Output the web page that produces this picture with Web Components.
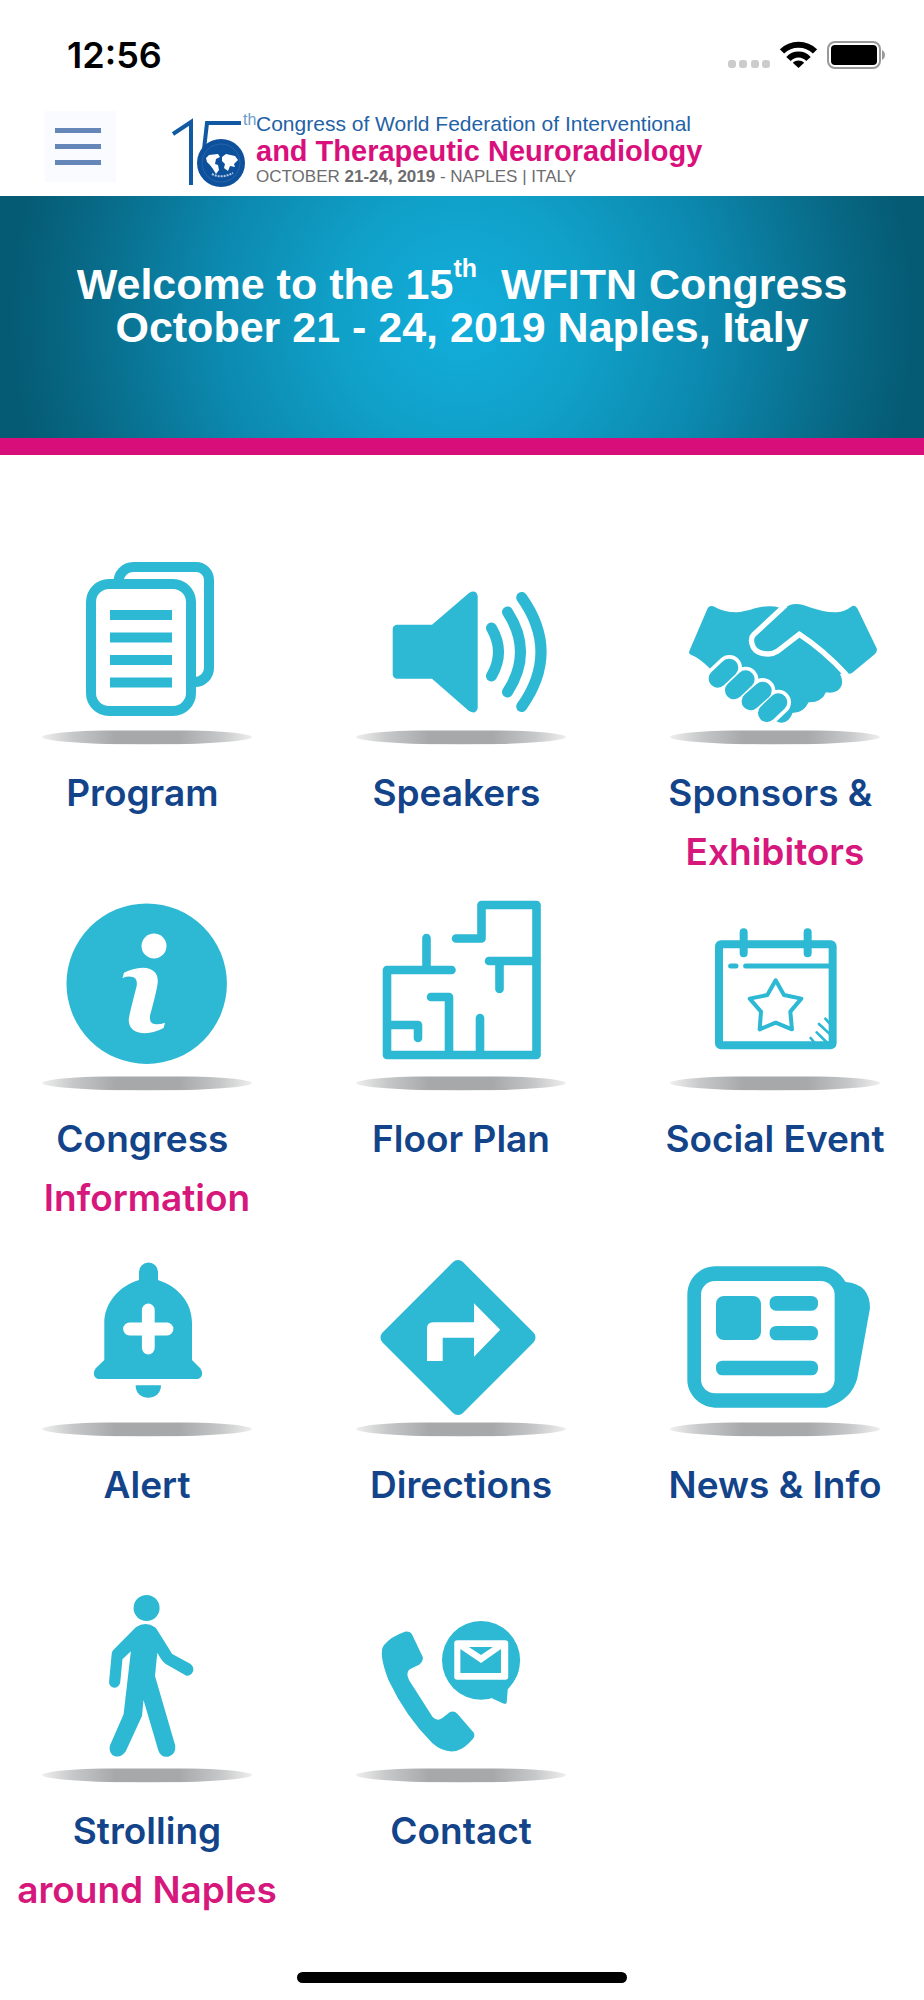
<!DOCTYPE html>
<html lang="en">
<head>
<meta charset="utf-8">
<meta name="viewport" content="width=device-width, initial-scale=1">
<title>WFITN Congress 2019</title>
<style>
  html { overflow-x: clip; }
  body { margin: 0; background: #fff; font-family: Inter, "Liberation Sans", sans-serif; }
</style>
</head>
<body>
<congress-app></congress-app>
<script>
const define = (name, html) => {
  const template = document.createElement('template');
  template.innerHTML = html;
  customElements.define(name, class extends HTMLElement {
    constructor() {
      super();
      this.attachShadow({ mode: 'open' }).append(template.content.cloneNode(true));
    }
  });
};

define('status-bar', `
<style>
  :host { display: flex; justify-content: space-between; align-items: center; height: 110px; padding: 0 38px 0 67px; box-sizing: border-box; color: #000; }
  time { font-size: 36px; line-height: 44px; font-weight: 600; }
  .signals { display: flex; align-items: center; gap: 10px; }
  svg { display: block; }
</style>
<time datetime="12:56">12:56</time>
<div class="signals">
  <svg width="42" height="28" viewBox="0 0 42 28" fill="#ccc" aria-hidden="true"><rect y="19" width="8" height="8" rx="3"/><rect x="11" y="19" width="8" height="8" rx="3"/><rect x="23" y="19" width="8" height="8" rx="3"/><rect x="34" y="19" width="8" height="8" rx="3"/></svg>
  <svg width="37" height="28" viewBox="0 0 37 28" fill="none" stroke="#000" stroke-width="6" aria-label="Wi-Fi" role="img"><path d="M2 10.500C11 1.500 26 1.500 35 10.500"/><path d="M8.500 18C14 12 23 12 28.500 18"/><path d="M18.500 27L12.800 21.800C16 18.800 21 18.800 24.200 21.800Z" fill="#000" stroke="none"/></svg>
  <svg width="59" height="28" viewBox="0 0 59 28" aria-label="Battery" role="img"><rect x="1" y="1" width="52" height="26" rx="7" fill="none" stroke="#999" stroke-width="2"/><rect x="4" y="4" width="46" height="20" rx="4"/><path d="M55 9C59 11 59 17 55 19Z" fill="#999"/></svg>
</div>`);

define('congress-logo', `
<style>
  :host { display: flex; font-family: "Liberation Sans", Arial, sans-serif; }
  svg { display: block; flex: none; overflow: visible; }
  .th { align-self: flex-start; width: 13px; font-size: 16px; line-height: 18px; color: #6b9cc8; }
  .name { white-space: nowrap; }
  .name span { display: block; }
  .top { font-size: 21px; line-height: 26px; color: #1f62a5; }
  .main { font-size: 29px; line-height: 28px; font-weight: 700; color: #d9107c; }
  .date { font-size: 17px; line-height: 24px; color: #6c6d6f; }
</style>
<svg width="71" height="78" viewBox="0 0 71 78" aria-hidden="true">
  <path d="M1 23L19 11V74M69 12H35L31 47" fill="none" stroke="#1259a3" stroke-width="4"/>
  <circle cx="49" cy="52" r="24" fill="#0d509b"/>
  <path d="M34 47L37 44L46 43L48 46L44 48L43 53L46 54L47 59L44 63L41 58L38 54L35 51ZM50 46L54 43L63 45L66 49L62 53L63 56L58 55L56 60L52 57L53 53L50 50Z" fill="#fff"/>
  <path d="M40 63Q50 68 61 62" fill="none" stroke="#b7cce4" stroke-width="2" stroke-dasharray="2 1"/>
  <ellipse cx="49" cy="52" rx="19" ry="19" fill="none" stroke="#3a73b3" stroke-width=".6"/>
</svg>
<span class="th">th</span>
<div class="name">
  <span class="top">Congress of World Federation of Interventional</span>
  <span class="main">and Therapeutic Neuroradiology</span>
  <span class="date">OCTOBER <b>21-24, 2019</b> - NAPLES | ITALY</span>
</div>`);

define('app-header', `
<style>
  :host { display: flex; align-items: flex-start; gap: 56px; height: 86px; padding: 1px 0 0 45px; box-sizing: border-box; }
  button { display: flex; flex-direction: column; justify-content: center; gap: 11px; width: 71px; height: 71px; padding: 0 13px 0 10px; border: 0; background: #fafbfe; flex: none; }
  i { display: block; height: 5px; width: 46px; background: #6486b9; }
</style>
<button type="button" aria-label="Menu"><i></i><i></i><i></i></button>
<slot></slot>`);

define('welcome-banner', `
<style>
  :host { display: block; padding: 67px 0 89px; border-bottom: 17px solid #d80f7b;
    background: radial-gradient(circle 450px at 50% 50%, #12aedc 0%, #10a0c8 28%, #0c88ae 56%, #086a87 84%, #055b74 100%) padding-box; }
  h1 { margin: 0; font: 700 43px/43px "Liberation Sans", Arial, sans-serif; color: #fff; text-align: center; }
  h1 span { display: block; }
  sup { font-size: 25px; line-height: 0; vertical-align: 22px; }
</style>
<h1><span>Welcome to the 15<sup>th</sup>&nbsp; WFITN Congress</span><span>October 21 - 24, 2019 Naples, Italy</span></h1>`);

const icons = {
  program: `<g fill="none" stroke="#2db8d3" stroke-width="10"><path d="M76.500 28A15 15 0 0 1 91.500 12H154A13 13 0 0 1 167 25V113A14 14 0 0 1 153 127"/><rect x="49" y="29" width="100" height="127" rx="18"/><path d="M68 60H130M68 82.500H130M68 105H130M68 127.500H130"/></g>`,
  speakers: `<path d="M41 69.700H76L113 38Q120 34 121.700 41V153Q120 160 113 156L76 123.700H41Q36.700 123 36.700 119V74Q37 70 41 69.700Z"/><g fill="none" stroke="#2db8d3" stroke-width="11" stroke-linecap="round"><path d="M135.500 73Q149.500 97 135.500 121"/><path d="M151.500 57Q177.500 97 151.500 137"/><path d="M165.700 42.500Q204.300 97 165.700 151.500"/></g>`,
  sponsors: `<g transform="translate(-30 -15) scale(.3333)"><path d="M203 205Q208 196 220 199Q250 217 290 217Q310 216 345 205Q385 194 420 203L434 205Q455 186 490 195Q550 218 590 217Q615 215 637 198Q646 194 652 205L710 325Q713 335 705 342L637 398Q628 405 618 396L600 402Q612 425 602 442Q590 462 558 457Q545 488 506 487Q490 520 458 518Q447 548 425 548Q415 548 408 543L300 450L212 388Q180 355 150 343Q146 340 148 333Z"/><path d="M436 196L341 284Q328 297 340 322Q352 342 385 342Q400 342 412 334L478 283Q550 330 618 403" fill="none" stroke="#fff" stroke-width="16"/><g fill="none" stroke="#fff" stroke-width="76" stroke-linecap="round"><path d="M268 383L233 416M317 418L282 451M368 452L332 484M415 487L381 519"/></g><g fill="none" stroke="#2db8d3" stroke-width="54" stroke-linecap="round"><path d="M268 383L233 416M317 418L282 451M368 452L332 484M415 487L381 519"/></g></g>`,
  info: `<circle cx="104.700" cy="82.700" r="80.200"/><circle cx="112" cy="45" r="12.500" fill="#fff"/><path transform="translate(-22 -21) scale(.3635 .3333)" fill="#fff" d="M282 294L286 278Q310 264 338 263Q380 265 379 305Q378 325 358 405Q354 432 374 433Q385 434 399 428L395 444Q370 459 344 460Q300 458 299 420Q300 405 321 318Q324 290 305 290Q295 289 282 294Z"/>`,
  floor: `<path d="M100 37.500H125.500V4H180.500V154H31V69H95.500M70.500 37V69M133 60H180M143.500 60V88M75 96H93V154M31 124H62V137M124 117V154" fill="none" stroke="#2db8d3" stroke-width="8.600" stroke-linecap="round" stroke-linejoin="round"/>`,
  social: `<g transform="translate(-30 -21) scale(.3333)" fill="none" stroke="#2db8d3" stroke-width="24" stroke-linecap="round" stroke-linejoin="round"><rect x="237" y="193" width="341" height="303" rx="6"/><path d="M311 157V220M503 157V220"/><path d="M272 258H288M317 258H573" stroke-width="15"/><path stroke-width="12" d="M407 301L432 345L484 356L451 395L456 448L407 428L359 448L363 395L329 356L382 345Z"/><path stroke-width="8" d="M556 416L570 432M537 432L568 461M530 457L560 487M512 474L522 486"/></g>`,
  alert: `<path d="M97 33V25A9.400 9.400 0 0 1 116 25V33C137 40 150 56 150 76V113L158 121C162 126 160 132 154 132H58C52 132 50 126 54 121L62.300 113V76C62.300 56 77 39 97 33ZM93.600 138.300H119C119 155 93.600 155 93.600 138.300Z"/><path d="M87.500 82H125M106.300 63V101" stroke="#fff" stroke-width="12.800" stroke-linecap="round"/>`,
  directions: `<path d="M102 20L172.500 90.500L102 161L31.500 90.500Z" stroke="#2db8d3" stroke-width="14" stroke-linejoin="round"/><path d="M71 114V81.500Q71 75.300 77.300 75.300H118V56.300L144.200 82.700L118 109.700V90.700H86.700V114Z" fill="#fff"/>`,
  news: `<g transform="translate(-30 -17) scale(.3333)"><path d="M225 109H545Q590 112 617 156Q690 162 690 235L652 445Q635 510 560 533H225C175 530 142 490 142 450V195C142 145 180 110 225 109Z"/><rect x="183" y="153" width="401" height="337" rx="42" fill="#fff"/><rect x="228" y="198" width="135" height="132" rx="24"/><rect x="389" y="198" width="145" height="44" rx="19"/><rect x="389" y="288" width="145" height="43" rx="19"/><rect x="228" y="392" width="306" height="44" rx="19"/></g>`,
  strolling: `<g transform="translate(-42 -23) scale(.3827 .3333)"><ellipse cx="383" cy="114" rx="34" ry="39"/><path d="M355 172Q380 152 405 172Q411 178 414 186L450 252L497 281Q507 290 505 302Q500 318 487 317L433 282Q424 275 411 248L405 318L458 527Q460 552 440 560Q420 563 414 542L375 390L371 438L329 543Q318 563 300 559Q283 550 287 527L323 433L342 244L320 268L314 338Q310 353 298 353Q285 350 285 335L292 250Q293 243 298 238Z"/></g>`,
  contact: `<g transform="translate(-356 -23) scale(.3827 .3333)"><path d="M1003 226Q1020 200 1058 185Q1072 183 1077 194L1105 262Q1106 275 1095 284L1072 297Q1063 303 1065 318Q1068 330 1072 336L1130 440Q1142 455 1155 445L1175 427Q1186 421 1195 431L1238 488Q1242 497 1236 506Q1215 535 1192 543Q1160 550 1130 520Q1060 440 1015 330Q988 250 1003 226Z"/><ellipse cx="1257" cy="271" rx="102" ry="118"/><path d="M1356 300Q1347 330 1327 355L1324 398Q1322 403 1317 401L1285 385Z"/><rect x="1187" y="211" width="141" height="118" rx="8" fill="#fff"/><path d="M1203 237L1257 279L1309 237V309H1203ZM1225 231H1288L1257 255Z"/></g>`,
};

const tile = document.createElement('template');
tile.innerHTML = `
<style>
  :host { display: block; }
  a { display: flex; flex-direction: column; align-items: center; gap: 18px; color: #13448a; text-decoration: none; }
  svg { display: block; fill: #2db8d3; overflow: visible; }
  .label { display: block; min-height: 118px; font-size: 37px; line-height: 59px; font-weight: 600; text-align: center; white-space: nowrap; }
  ::slotted([slot="accent"]) { display: block; color: #d6177c; }
</style>
<a>
  <svg width="210" height="190" viewBox="0 0 210 190" aria-hidden="true">
    <defs>
      <linearGradient id="shade"><stop stop-color="#eee"/><stop offset=".15" stop-color="#c6c7c8"/><stop offset=".35" stop-color="#a6a8aa"/><stop offset=".65" stop-color="#a6a8aa"/><stop offset=".85" stop-color="#c6c7c8"/><stop offset="1" stop-color="#eee"/></linearGradient>
      <clipPath id="floor"><rect y="175.500" width="210" height="14"/></clipPath>
    </defs>
    <ellipse cx="105" cy="182" rx="105" ry="7.500" fill="url(#shade)" clip-path="url(#floor)"/>
    <g class="icon"></g>
  </svg>
  <span class="label"><slot></slot><slot name="accent"></slot></span>
</a>`;
customElements.define('menu-tile', class extends HTMLElement {
  constructor() {
    super();
    this.attachShadow({ mode: 'open' }).append(tile.content.cloneNode(true));
  }
  connectedCallback() {
    const name = this.getAttribute('icon');
    this.shadowRoot.querySelector('a').href = '#' + name;
    this.shadowRoot.querySelector('.icon').innerHTML = icons[name];
  }
});

define('tile-grid', `
<style>
  :host { display: block; padding-top: 100px; }
  nav { display: grid; grid-template-columns: repeat(3, minmax(0, 1fr)); row-gap: 20px; margin: 0 -8px 0 -10px; }
</style>
<nav aria-label="Congress sections"><slot></slot></nav>`);

define('home-indicator', `
<style>
  :host { display: flex; justify-content: center; padding: 53px 0 17px; }
  div { width: 330px; height: 11px; border-radius: 6px; background: #000; }
</style>
<div></div>`);

define('congress-app', `
<style>:host { display: block; }</style>
<status-bar></status-bar>
<app-header><congress-logo></congress-logo></app-header>
<main>
  <welcome-banner></welcome-banner>
  <tile-grid>
    <menu-tile icon="program">Program&nbsp;</menu-tile>
    <menu-tile icon="speakers">Speakers&nbsp;</menu-tile>
    <menu-tile icon="sponsors">Sponsors &amp;&nbsp;<span slot="accent">Exhibitors</span></menu-tile>
    <menu-tile icon="info">Congress&nbsp;<span slot="accent">Information</span></menu-tile>
    <menu-tile icon="floor">Floor Plan</menu-tile>
    <menu-tile icon="social">Social Event</menu-tile>
    <menu-tile icon="alert">Alert</menu-tile>
    <menu-tile icon="directions">Directions</menu-tile>
    <menu-tile icon="news">News &amp; Info</menu-tile>
    <menu-tile icon="strolling">Strolling<span slot="accent">around Naples</span></menu-tile>
    <menu-tile icon="contact">Contact</menu-tile>
  </tile-grid>
</main>
<home-indicator></home-indicator>`);
</script>
</body>
</html>
